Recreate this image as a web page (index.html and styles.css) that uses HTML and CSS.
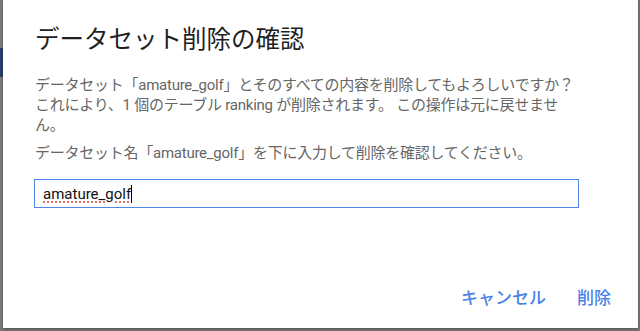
FILE: index.html
```html
<!DOCTYPE html>
<html lang="ja">
<head>
<meta charset="utf-8">
<title>データセット削除の確認</title>
<link rel="stylesheet" href="styles.css">
</head>
<body>
<div class="page">
  <div class="behind">
    <div class="behind-bar"></div>
  </div>
  <div class="dialog">
    <h1 class="title">データセット削除の確認</h1>
    <p class="text">データセット「amature_golf」とそのすべての内容を削除してもよろしいですか？ これにより、1 個のテーブル ranking が削除されます。 この操作は元に戻せません。</p>
    <p class="text">データセット名「amature_golf」を下に入力して削除を確認してください。</p>
    <div class="field"><span class="typo">amature_golf</span><span class="caret"></span></div>
    <div class="actions">
      <button class="btn">キャンセル</button>
      <button class="btn">削除</button>
    </div>
  </div>
</div>
</body>
</html>
```

FILE: styles.css
```css
html, body{
	margin: 0;
	padding: 0;
	height: 100%;
}
body{
	background: #787878;
	font-family: Roboto, "Noto Sans CJK JP", sans-serif;
}
.page{
	display: flex;
	height: 328px;
	padding-right: 2px;
}
.behind{
	width: 3px;
	background: #7d7d7d;
	padding-top: 48px;
}
.behind-bar{
	height: 29px;
	background: #2c3c6a;
}
.dialog{
	flex: 1;
	background: #fff;
	display: flex;
	flex-direction: column;
	padding: 24px 59px 0 31px;
	box-shadow: 0 1px 3px rgba(0,0,0,.35);
}
.title{
	margin: 0 0 19px 1px;
	font-size: 24.5px;
	line-height: 32px;
	font-weight: 400;
	color: #1f1f1f;
}
.text{
	margin: 0 0 8px 1px;
	font-size: 15px;
	line-height: 20px;
	letter-spacing: -0.25px;
	color: #666;
}
.field{
	margin-top: 8px;
	height: 27px;
	border: 1px solid #4f86e4;
	padding: 0 8px;
	display: flex;
	align-items: center;
	font-size: 15px;
	color: #111;
}
.typo{
	text-decoration: underline dotted #e0413a;
	text-underline-offset: 3px;
}
.caret{
	width: 1px;
	height: 18px;
	background: #000;
}
.actions{
	margin-top: auto;
	margin-right: -40px;
	padding-bottom: 14px;
	display: flex;
	justify-content: flex-end;
	gap: 15px;
}
.btn{
	height: 36px;
	padding: 0 8px;
	border: none;
	background: none;
	font-family: Roboto, "Noto Sans CJK JP", sans-serif;
	font-size: 17px;
	font-weight: 500;
	color: #4a82e8;
}
```
